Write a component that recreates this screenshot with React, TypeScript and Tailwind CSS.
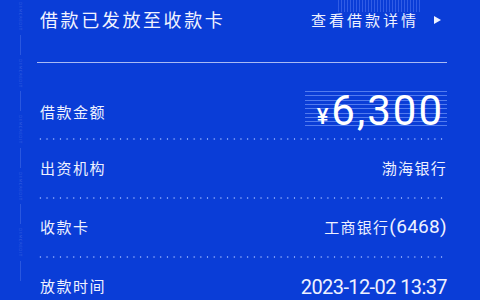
import React from 'react';

const cjk = 'font-["Noto_Sans_CJK_SC",sans-serif]';
const num = 'font-["Roboto","Noto_Sans_CJK_SC",sans-serif]';

function Dots() {
  return (
    <div className="-ml-[3px] h-[2px] bg-[radial-gradient(circle,rgba(150,178,255,0.85)_0.7px,transparent_1.1px)] bg-[length:6.7px_2px]" />
  );
}

function Row({ label, children }: { label: string; children: React.ReactNode }) {
  return (
    <div className="flex h-[57px] items-center justify-between">
      <span className={`${cjk} text-[15px] tracking-[1.5px] text-[#eef1ff]`}>{label}</span>
      {children}
    </div>
  );
}

function SideMark() {
  return (
    <div className="flex w-[40px] flex-col items-center gap-[4px] pt-[2px] opacity-20">
      {[0, 1, 2, 3, 4].map((i) => (
        <div key={i} className="flex flex-col items-center gap-[4px]">
          <span className="font-['DejaVu_Sans',sans-serif] text-[4px] leading-[5px] tracking-[0.5px] text-[#c9d5ff] [writing-mode:vertical-rl]">
            DXMCREDIT
          </span>
          <div className="h-[20px] w-px bg-[#aabdff]" />
        </div>
      ))}
    </div>
  );
}

export default function App() {
  return (
    <div className="relative flex h-[300px] w-[480px] overflow-hidden bg-[#0a3dd7]">
      <div className="absolute left-[338px] top-0 h-[12px] w-[84px] bg-[repeating-linear-gradient(to_right,rgba(120,150,255,0.35)_0px,rgba(120,150,255,0.35)_1px,transparent_1px,transparent_3px)]" />
      <SideMark />
      <div className="flex-1 pr-[33px]">
        <div className="flex h-[62px] items-start justify-between pt-[7px]">
          <h1 className={`${cjk} text-[18px] font-normal leading-[24px] tracking-[2.6px] text-[#f1f3ff]`}>
            借款已发放至收款卡
          </h1>
          <div className="flex items-center pt-[1px]">
            <span className={`${cjk} text-[15px] leading-[24px] tracking-[3px] text-[#eef1ff]`}>查看借款详情</span>
            <svg width="7" height="8" viewBox="0 0 7 8" className="ml-[15px] mr-[6px]">
              <path d="M0 0 L7 4 L0 8 Z" fill="#eef1ff" />
            </svg>
          </div>
        </div>
        <div className="-ml-[3px] h-px bg-[#a9baf4]" />

        <div className="flex items-center justify-between pb-[8px] pt-[28px]">
          <span className={`${cjk} pt-[3px] text-[15px] tracking-[1.5px] text-[#eef1ff]`}>借款金额</span>
          <div className="flex h-[39px] w-[142px] items-center justify-end bg-[repeating-linear-gradient(to_bottom,rgba(130,165,255,0.6)_0px,rgba(130,165,255,0.6)_1px,transparent_1px,transparent_4.3px)] pr-[3px]">
            <span className={`${num} mr-[3px] mt-[12px] text-[22px] font-medium leading-none text-white`}>¥</span>
            <span className={`${num} text-[42px] leading-none tracking-[2px] text-white`}>6,300</span>
          </div>
        </div>
        <Dots />

        <Row label="出资机构">
          <span className={`${cjk} text-[15px] tracking-[1.3px] text-[#eef1ff]`}>渤海银行</span>
        </Row>
        <Dots />
        <Row label="收款卡">
          <span className="flex items-center">
            <span className={`${cjk} text-[15px] tracking-[1.3px] text-[#eef1ff]`}>工商银行</span>
            <span className={`${num} text-[19px] tracking-[0.3px] text-[#eef1ff]`}>(6468)</span>
          </span>
        </Row>
        <Dots />
        <Row label="放款时间">
          <span className={`${num} text-[20px] tracking-[-0.6px] text-[#eef1ff]`}>2023-12-02 13:37</span>
        </Row>
      </div>
    </div>
  );
}
